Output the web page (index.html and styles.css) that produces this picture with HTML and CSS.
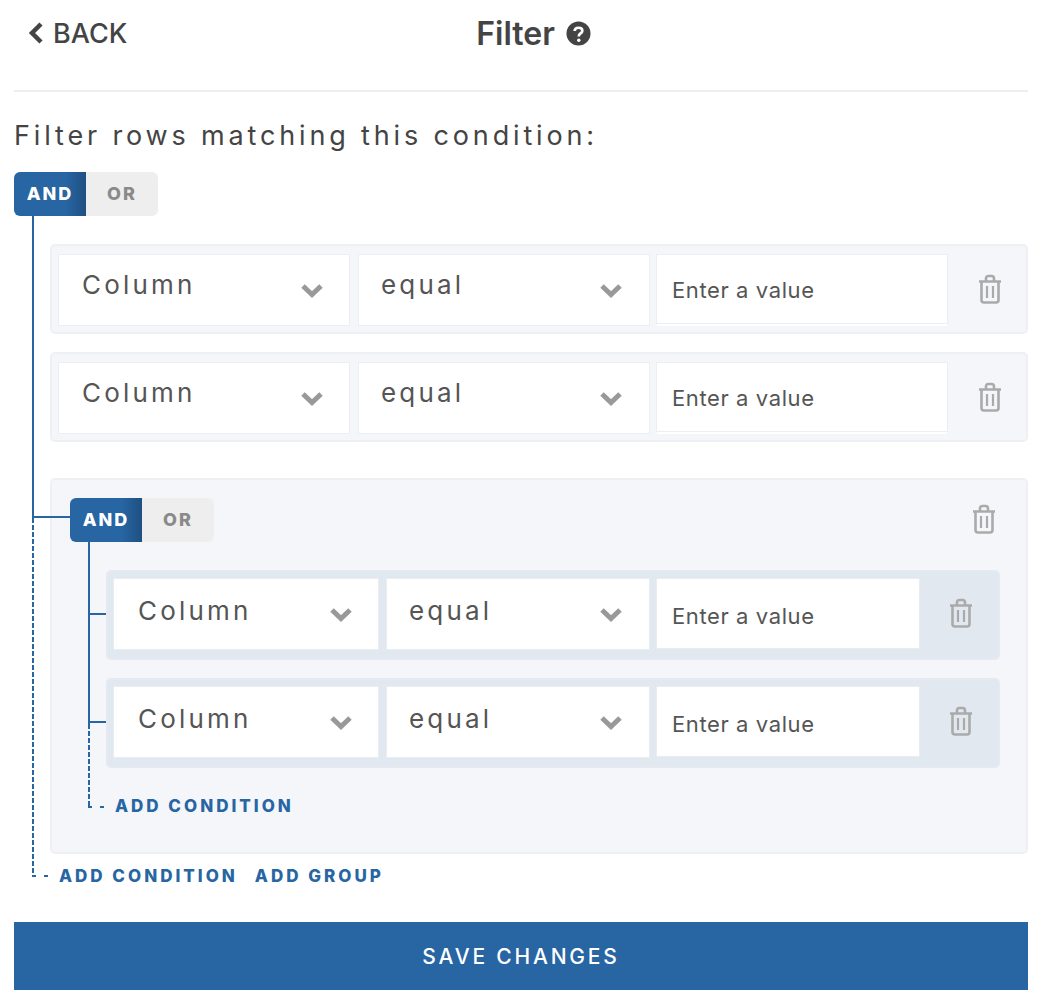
FILE: index.html
```html
<!DOCTYPE html>
<html lang="en">

<head>
    <meta charset="UTF-8" />
    <meta name="viewport" content="width=device-width, initial-scale=1.0" />
    <title>Filter</title>
    <link rel="stylesheet" href="styles.css">
</head>

<body>
    <svg class="hidden">
        <symbol id="trash" viewBox="0 0 24 30">
            <path d="M1 7.5H23M8 7V4.5Q8 2 10.5 2H13.500Q16 2 16 4.500V7M3.500 7.500V26Q3.500 28.500 6 28.500H18Q20.500 28.500 20.500 26V7.500" fill="none" stroke="currentColor" stroke-width="2.600" />
            <path d="M9 12V24M15 12V24" fill="none" stroke="currentColor" stroke-width="2.200" />
        </symbol>
        <symbol id="chevron" viewBox="0 0 24 16">
            <path d="M3 4L12 12.500L21 4" fill="none" stroke="currentColor" stroke-width="5" />
        </symbol>
    </svg>

    <header class="topbar">
        <a class="back">
            <svg width="16" height="24" viewBox="0 0 16 24">
                <path d="M13 3L4 12L13 21" fill="none" stroke="#444" stroke-width="4.500" />
            </svg>
            BACK
        </a>
        <h1 class="title">
            Filter
            <svg width="25" height="25" viewBox="0 0 26 26">
                <circle cx="13" cy="13" r="12.500" fill="#444" />
                <path d="M9 10.500Q9 7 13 7Q17 7 17 10.200Q17 12 15 13Q13.300 14 13.300 16" fill="none" stroke="#fff" stroke-width="2.800" />
                <circle cx="13.300" cy="20" r="1.800" fill="#fff" />
            </svg>
        </h1>
    </header>

    <h2 class="lead">Filter rows matching this condition:</h2>

    <section class="tree">
        <div class="toggle toggle-root"><span class="on">AND</span><span class="off">OR</span></div>
        <span class="line line-solid"></span>
        <span class="line line-dashed"></span>
        <span class="line line-end"></span>

        <div class="row">
            <div class="select"><span>Column</span><svg class="chev"><use href="#chevron" /></svg></div>
            <div class="select"><span>equal</span><svg class="chev"><use href="#chevron" /></svg></div>
            <input class="value" type="text" placeholder="Enter a value">
            <svg class="trash"><use href="#trash" /></svg>
        </div>
        <div class="row">
            <div class="select"><span>Column</span><svg class="chev"><use href="#chevron" /></svg></div>
            <div class="select"><span>equal</span><svg class="chev"><use href="#chevron" /></svg></div>
            <input class="value" type="text" placeholder="Enter a value">
            <svg class="trash"><use href="#trash" /></svg>
        </div>

        <div class="group">
            <span class="branch"></span>
            <div class="group-head">
                <div class="toggle"><span class="on">AND</span><span class="off">OR</span></div>
                <svg class="trash"><use href="#trash" /></svg>
            </div>
            <div class="group-body">
                <span class="line line-solid"></span>
                <span class="line line-dashed"></span>
                <span class="line line-end"></span>
                <div class="row row-inner">
                    <span class="tick"></span>
                    <div class="select"><span>Column</span><svg class="chev"><use href="#chevron" /></svg></div>
                    <div class="select"><span>equal</span><svg class="chev"><use href="#chevron" /></svg></div>
                    <input class="value" type="text" placeholder="Enter a value">
                    <svg class="trash"><use href="#trash" /></svg>
                </div>
                <div class="row row-inner">
                    <span class="tick"></span>
                    <div class="select"><span>Column</span><svg class="chev"><use href="#chevron" /></svg></div>
                    <div class="select"><span>equal</span><svg class="chev"><use href="#chevron" /></svg></div>
                    <input class="value" type="text" placeholder="Enter a value">
                    <svg class="trash"><use href="#trash" /></svg>
                </div>
                <div class="adds adds-inner"><a>ADD CONDITION</a></div>
            </div>
        </div>

        <div class="adds"><a>ADD CONDITION</a><a>ADD GROUP</a></div>
    </section>

    <button class="save" type="button">SAVE CHANGES</button>
</body>

</html>
```

FILE: styles.css
```css
body {
    margin: 0;
    padding: 0 20px 16px 14px;
    font-family: Inter, 'Noto Sans', sans-serif;
    background-color: #fff;
    color: #444;
}

.hidden {
    display: none;
}

.topbar {
    display: flex;
    align-items: center;
    height: 66px;
    padding-bottom: 24px;
    border-bottom: 2px solid #eee;
}

.back {
    display: flex;
    align-items: center;
    gap: 9px;
    margin-left: 14px;
    font-size: 27px;
    font-weight: 500;
}

.title {
    display: flex;
    align-items: center;
    gap: 11px;
    margin: 0 0 0 349px;
    font-size: 32px;
    font-weight: 600;
}

.lead {
    margin: 28px 0 20px;
    font-size: 27px;
    line-height: 32px;
    font-weight: 400;
    letter-spacing: 3.85px;
}

.tree {
    position: relative;
    padding-left: 36px;
}

.toggle {
    display: inline-flex;
    height: 44px;
    font-size: 18px;
    line-height: 44px;
    font-weight: 800;
    letter-spacing: 2px;
    text-align: center;
}

.toggle-root {
    display: flex;
    width: 144px;
    margin: 0 0 28px -36px;
}

.on {
    width: 72px;
    color: #fff;
    border-radius: 6px 0 0 6px;
    background: linear-gradient(90deg, #2765a3 72%, #1f4f80);
}

.off {
    width: 72px;
    color: #8a8a8a;
    background-color: #eee;
    border-radius: 0 6px 6px 0;
}

.row {
    display: flex;
    align-items: flex-start;
    box-sizing: border-box;
    height: 90px;
    margin-bottom: 18px;
    padding: 9px 7px;
    background-color: #f5f6fa;
    border: 2px solid #eff0f4;
    border-radius: 5px;
}

.select {
    display: flex;
    justify-content: space-between;
    align-items: center;
    box-sizing: border-box;
    width: 290px;
    height: 70px;
    margin-right: 10px;
    padding: 0 25px 12px 23px;
    background-color: #fff;
    box-shadow: 0 0 0 1px #eceef3;
    font-size: 26px;
    letter-spacing: 3.2px;
    color: #555;
}

.select + .select {
    margin-right: 8px;
    padding: 0 26px 12px 22px;
}

.chev {
    width: 24px;
    height: 16px;
    margin-top: 12px;
    color: #999;
}

.value {
    box-sizing: border-box;
    width: 290px;
    height: 68px;
    padding: 2px 15px 0;
    background-color: #fff;
    border: none;
    box-shadow: 0 0 0 1px #eceef3, 0 3px 0 #fff;
    outline: none;
    font-family: inherit;
    font-size: 22px;
    letter-spacing: 0.6px;
}

.value::placeholder {
    color: #555;
    opacity: 1;
}

.trash {
    flex: none;
    width: 24px;
    height: 30px;
    margin: 19px 0 0 31px;
    color: #aaa;
}

.group {
    position: relative;
    box-sizing: border-box;
    height: 376px;
    margin-top: 36px;
    padding: 18px 18px 0;
    background-color: #f5f6fa;
    border: 2px solid #eff0f4;
    border-radius: 5px;
}

.group-head {
    display: flex;
    justify-content: space-between;
    align-items: flex-start;
    margin-bottom: 28px;
}

.group-head .trash {
    margin: 6px 12px 0 0;
}

.group-body {
    position: relative;
    padding: 0 8px 0 36px;
}

.row-inner {
    padding: 7px 6px;
    background-color: #e2e8f0;
    border-color: #e5eaf2;
}

.row-inner .select {
    width: 264px;
    margin-right: 9px;
    padding-left: 24px;
    padding-bottom: 8px;
    box-shadow: 0 0 0 1px #e8edf4;
}

.row-inner .select + .select {
    width: 262px;
    margin-right: 8px;
    padding-left: 22px;
}

.row-inner .chev {
    margin-top: 8px;
}

.row-inner .value {
    width: 262px;
    height: 69px;
    padding-top: 4px;
    box-shadow: 0 0 0 1px #e8edf4;
}

.row-inner .trash {
    margin-left: 30px;
}

/* tree connectors */
.line {
    position: absolute;
    left: 18px;
    width: 2px;
    background-color: #2765a3;
}

.line-solid {
    top: 44px;
    height: 302px;
}

.line-dashed {
    top: 346px;
    height: 359px;
    background: repeating-linear-gradient(180deg, #2765a3 0 5px, transparent 5px 7px);
}

.line-end {
    top: 703px;
    width: 18px;
    height: 2px;
    background: repeating-linear-gradient(90deg, #2765a3 0 4px, transparent 4px 12px);
}

.group-body .line-solid {
    top: -28px;
    height: 182px;
}

.group-body .line-dashed {
    top: 154px;
    height: 84px;
}

.group-body .line-end {
    top: 236px;
}

.branch {
    position: absolute;
    left: -18px;
    top: 36px;
    width: 38px;
    height: 2px;
    background-color: #2765a3;
}

.tick {
    position: absolute;
    left: 18px;
    width: 18px;
    height: 2px;
    margin-top: 34px;
    background-color: #2765a3;
}

.adds {
    display: flex;
    gap: 17px;
    margin: 11px 0 0 9px;
    color: #2765a3;
    font-size: 17px;
    line-height: 22px;
    font-weight: 800;
    letter-spacing: 3px;
}

.adds-inner {
    margin: 27px 0 0 9px;
}

.save {
    display: block;
    width: 100%;
    height: 68px;
    margin-top: 35px;
    padding: 0;
    background-color: #2765a3;
    color: #fff;
    border: none;
    font-family: inherit;
    font-size: 21px;
    font-weight: 500;
    letter-spacing: 2.8px;
}
```
